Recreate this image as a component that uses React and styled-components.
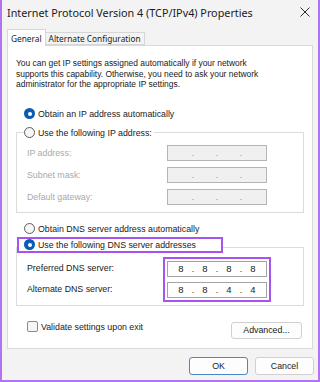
import React from 'react';
import styled, { createGlobalStyle } from 'styled-components';

const UI = `"Noto Sans", "Open Sans", sans-serif`;
const BODY = `"Liberation Sans", Arial, sans-serif`;

const Global = createGlobalStyle`
  html, body { margin: 0; padding: 0; background: #f3f3f3; }
  *, *::before, *::after { box-sizing: border-box; }
  #root { width: 320px; height: 382px; }
`;

const Window = styled.div`
  width: 320px;
  height: 382px;
  background: #f3f3f3;
  border: 2px solid #b272f2;
  border-top: none;
  display: flex;
  flex-direction: column;
  font-family: ${BODY};
  color: #1a1a1a;
`;

const TitleBar = styled.div`
  height: 24px;
  display: flex;
  align-items: center;
  justify-content: space-between;
  padding: 0 8px 0 5px;
  font-family: ${UI};
  font-size: 10.8px;
  color: #1b1b1b;
`;

const TabStrip = styled.div`
  margin-top: 5px;
  height: 16px;
  display: flex;
  align-items: flex-end;
  padding-left: 5px;
  position: relative;
  z-index: 1;
`;

const Tab = styled.div`
  height: ${p => (p.$active ? '17px' : '13px')};
  margin-bottom: ${p => (p.$active ? '-1px' : '0')};
  padding: 0 3px;
  display: flex;
  align-items: center;
  border: 1px solid #d6d6d6;
  border-bottom: ${p => (p.$active ? 'none' : '1px solid #d6d6d6')};
  border-left: ${p => (p.$active ? '1px solid #d6d6d6' : 'none')};
  background: ${p => (p.$active ? '#ffffff' : '#f3f3f3')};
  font-family: ${UI};
  font-size: 8.3px;
  color: #1b1b1b;
  white-space: nowrap;
`;

const Panel = styled.div`
  margin: 0 5px;
  height: 304px;
  background: #ffffff;
  border: 1px solid #dadada;
  display: flex;
  flex-direction: column;
  padding: 12px 9px 0 8px;
  font-size: 8.8px;
`;

const Intro = styled.p`
  margin: 0;
  font-size: 8.45px;
  line-height: 10.5px;
  color: #1a1a1a;
`;

const OptionRow = styled.label`
  display: flex;
  align-items: center;
  height: 12px;
  padding-left: ${p => p.$indent ?? 8}px;
  margin-top: ${p => p.$top ?? 0}px;
  white-space: nowrap;
`;

const Radio = styled.span`
  width: 11px;
  height: 11px;
  border-radius: 50%;
  margin-right: 3px;
  flex: none;
  background: ${p => (p.$checked ? '#0a5cb4' : '#f7f7f7')};
  border: ${p => (p.$checked ? 'none' : '1px solid #5c5c5c')};
  display: flex;
  align-items: center;
  justify-content: center;
  &::after {
    content: '';
    width: 4px;
    height: 4px;
    border-radius: 50%;
    background: #fff;
    display: ${p => (p.$checked ? 'block' : 'none')};
  }
`;

const Group = styled.fieldset`
  margin: ${p => p.$top ?? 0}px 0 0 0;
  padding: 0;
  border: 1px solid #dcdcdc;
  border-radius: 0;
  min-width: 0;
  width: 288px;
`;

const Legend = styled.legend`
  padding: 0 ${p => (p.$plain ? 2 : 0)}px ${p => p.$pb ?? 0}px 0;
  margin-left: ${p => p.$ml ?? 0}px;
`;

const Highlight = styled.div`
  border: 2px solid #a653f0;
  display: flex;
  flex-direction: ${p => (p.$column ? 'column' : 'row')};
  gap: ${p => p.$gap ?? 0}px;
  padding: ${p => p.$pad ?? '0'};
  width: ${p => (p.$w ? p.$w + 'px' : 'auto')};
  height: ${p => (p.$h ? p.$h + 'px' : 'auto')};
  align-items: ${p => (p.$column ? 'stretch' : 'center')};
  margin-top: ${p => p.$mt ?? 0}px;
`;

const GroupBody = styled.div`
  display: flex;
  padding: ${p => p.$pad};
`;

const Labels = styled.div`
  width: ${p => p.$w}px;
  display: flex;
  flex-direction: column;
  gap: ${p => p.$gap}px;
  padding-top: ${p => p.$pt ?? 0}px;
`;

const FieldLabel = styled.div`
  height: 16px;
  display: flex;
  align-items: center;
  color: ${p => (p.$disabled ? '#a9a9a9' : '#1a1a1a')};
  white-space: nowrap;
`;

const Fields = styled.div`
  display: flex;
  flex-direction: column;
  gap: ${p => p.$gap}px;
`;

const IpBox = styled.div`
  width: 100px;
  height: 16px;
  display: flex;
  align-items: center;
  padding-left: 2px;
  border: 1px solid ${p => (p.$disabled ? '#b4b4b4' : '#a4a4a4')};
  background: ${p => (p.$disabled ? '#f0f0f0' : '#ffffff')};
`;

const Octet = styled.span`
  width: 22px;
  text-align: center;
  font-size: 9.5px;
  color: #1a1a1a;
`;

const Dot = styled.span`
  width: 2px;
  display: flex;
  justify-content: center;
  font-size: 9px;
  color: ${p => (p.$disabled ? '#8a8a8a' : '#1a1a1a')};
`;

const BottomRow = styled.div`
  margin-top: 15px;
  display: flex;
  justify-content: space-between;
  align-items: flex-start;
  padding: 0 1px 0 11px;
`;

const CheckLabel = styled.label`
  display: flex;
  align-items: center;
  height: 12px;
  white-space: nowrap;
`;

const Checkbox = styled.span`
  width: 11px;
  height: 11px;
  border: 1px solid #8a8a8a;
  border-radius: 2px;
  background: #f6f6f6;
  margin-right: 3px;
`;

const Button = styled.button`
  width: ${p => p.$w}px;
  height: ${p => p.$h}px;
  margin-top: ${p => p.$mt ?? 0}px;
  padding: 0;
  background: #fdfdfd;
  border: 1px solid ${p => (p.$default ? '#4d86c6' : '#d0d0d0')};
  border-radius: 3px;
  font-family: ${BODY};
  font-size: 8.8px;
  color: #1a1a1a;
`;

const Footer = styled.div`
  display: flex;
  justify-content: flex-end;
  gap: 7px;
  padding: 8px 4px 0 0;
`;

function Ip({ value, disabled }) {
  const parts = value ? value.split('.') : ['', '', '', ''];
  const out = [];
  parts.forEach((p, i) => {
    out.push(<Octet key={'o' + i}>{p}</Octet>);
    if (i < 3) out.push(<Dot key={'d' + i} $disabled={disabled}>.</Dot>);
  });
  return <IpBox $disabled={disabled}>{out}</IpBox>;
}

export default function App() {
  return (
    <>
      <Global />
      <Window>
        <TitleBar>
          <span>Internet Protocol Version 4 (TCP/IPv4) Properties</span>
          <svg width="10" height="10" viewBox="0 0 10 10">
            <path d="M0.5 0.5 L9.5 9.5 M9.5 0.5 L0.5 9.5" stroke="#2a2a2a" strokeWidth="1" />
          </svg>
        </TitleBar>
        <TabStrip>
          <Tab $active>General</Tab>
          <Tab>Alternate Configuration</Tab>
        </TabStrip>
        <Panel>
          <Intro>
            You can get IP settings assigned automatically if your network
            <br />
            supports this capability. Otherwise, you need to ask your network
            <br />
            administrator for the appropriate IP settings.
          </Intro>
          <OptionRow $top={18}>
            <Radio $checked />
            Obtain an IP address automatically
          </OptionRow>
          <Group $top={7}>
            <Legend $ml={7} $plain>
              <OptionRow $indent={0}>
                <Radio />
                Use the following IP address:
              </OptionRow>
            </Legend>
            <GroupBody $pad="6px 0 7px 10px">
              <Labels $w={140} $gap={6}>
                <FieldLabel $disabled>IP address:</FieldLabel>
                <FieldLabel $disabled>Subnet mask:</FieldLabel>
                <FieldLabel $disabled>Default gateway:</FieldLabel>
              </Labels>
              <Fields $gap={6}>
                <Ip disabled />
                <Ip disabled />
                <Ip disabled />
              </Fields>
            </GroupBody>
          </Group>
          <OptionRow $top={10}>
            <Radio />
            Obtain DNS server address automatically
          </OptionRow>
          <Group $top={2}>
            <Legend $pb={6}>
              <Highlight $w={206} $h={16} $pad="0 0 0 5px">
                <Radio $checked />
                Use the following DNS server addresses
              </Highlight>
            </Legend>
            <GroupBody $pad="0 0 3px 10px">
              <Labels $w={136} $gap={5} $pt={1}>
                <FieldLabel>Preferred DNS server:</FieldLabel>
                <FieldLabel>Alternate DNS server:</FieldLabel>
              </Labels>
              <Highlight $column $gap={5} $pad="2px" $mt={-2}>
                <Ip value="8.8.8.8" />
                <Ip value="8.8.4.4" />
              </Highlight>
            </GroupBody>
          </Group>
          <BottomRow>
            <CheckLabel>
              <Checkbox />
              Validate settings upon exit
            </CheckLabel>
            <Button $w={71} $h={17} $mt={1}>Advanced...</Button>
          </BottomRow>
        </Panel>
        <Footer>
          <Button $w={59} $h={18} $default>OK</Button>
          <Button $w={59} $h={18}>Cancel</Button>
        </Footer>
      </Window>
    </>
  );
}
